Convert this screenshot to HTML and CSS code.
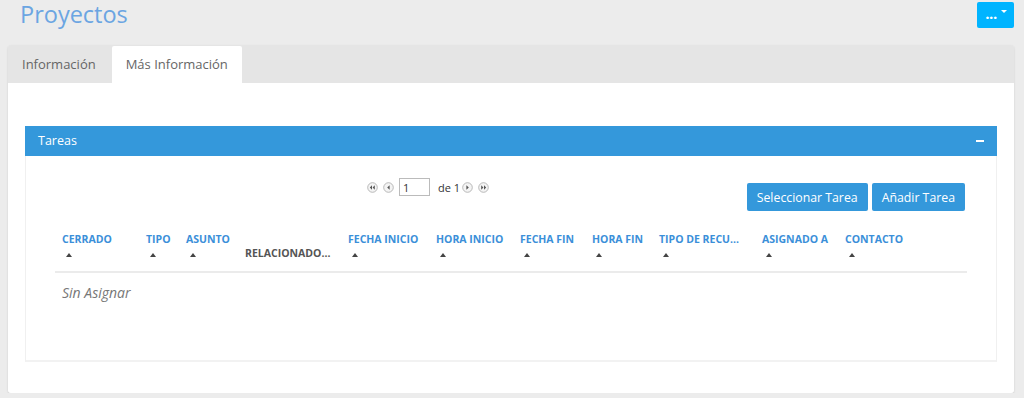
FILE: index.html
```html
<!DOCTYPE html>
<html lang="es">
<head>
    <meta charset="UTF-8">
    <title>Proyectos</title>
    <link rel="stylesheet" href="styles.css">
</head>
<body>
    <div class="page-header">
        <h1>Proyectos</h1>
        <button class="btn-more">...<span class="caret"></span></button>
    </div>

    <div class="tabs">
        <div class="tab-bar">
            <div class="tab">Información</div>
            <div class="tab active">Más Información</div>
        </div>
        <div class="tab-content">
            <div class="panel">
                <div class="panel-heading">
                    <span>Tareas</span>
                    <span class="collapse"></span>
                </div>
                <div class="panel-body">
                    <div class="toolbar">
                        <div class="pager">
                            <svg class="pg" viewBox="0 0 11 11"><circle cx="5.5" cy="5.5" r="4.8"/><path d="M5 3.2v4.6L2.8 5.5zM7.8 3.2v4.6L5.6 5.5z"/></svg>
                            <svg class="pg" viewBox="0 0 11 11"><circle cx="5.5" cy="5.5" r="4.8"/><path d="M6.6 3.2v4.6L4.2 5.5z"/></svg>
                            <input type="text" value="1">
                            <span class="of">de 1</span>
                            <svg class="pg" viewBox="0 0 11 11"><circle cx="5.5" cy="5.5" r="4.8"/><path d="M4.4 3.2v4.6L6.8 5.5z"/></svg>
                            <svg class="pg" viewBox="0 0 11 11"><circle cx="5.5" cy="5.5" r="4.8"/><path d="M3.2 3.2v4.6L5.4 5.5zM6 3.2v4.6L8.2 5.5z"/></svg>
                        </div>
                        <div class="actions">
                            <button class="btn">Seleccionar Tarea</button>
                            <button class="btn">Añadir Tarea</button>
                        </div>
                    </div>

                    <table class="grid">
                        <thead>
                            <tr>
                                <th style="width:84px">Cerrado<i class="sort"></i></th>
                                <th style="width:40px">Tipo<i class="sort"></i></th>
                                <th style="width:59px">Asunto<i class="sort"></i></th>
                                <th class="plain" style="width:103px">Relacionado...</th>
                                <th style="width:88px">Fecha Inicio<i class="sort"></i></th>
                                <th style="width:84px">Hora Inicio<i class="sort"></i></th>
                                <th style="width:72px">Fecha Fin<i class="sort"></i></th>
                                <th style="width:67px">Hora Fin<i class="sort"></i></th>
                                <th style="width:103px">Tipo de recu...<i class="sort"></i></th>
                                <th style="width:83px">Asignado a<i class="sort"></i></th>
                                <th>Contacto<i class="sort"></i></th>
                            </tr>
                        </thead>
                        <tbody>
                            <tr>
                                <td colspan="11" class="empty">Sin Asignar</td>
                            </tr>
                        </tbody>
                    </table>
                </div>
            </div>
        </div>
    </div>
</body>
</html>
```

FILE: styles.css
```css
body {
    margin: 0;
    background: #ececec;
    font-family: "Open Sans", "Noto Sans", sans-serif;
    color: #555;
}
.page-header {
    height: 45px;
    display: flex;
    justify-content: space-between;
    align-items: flex-start;
    padding: 0 10px 0 20px;
}
.page-header h1 {
    margin: 0;
    font-size: 23.5px;
    font-weight: 400;
    line-height: 28px;
    color: #6ba5e2;
}
.btn-more {
    margin-top: 2px;
    width: 37px;
    height: 26px;
    background: #00b4ff;
    border: none;
    border-radius: 2px;
    color: white;
    font-family: inherit;
    font-size: 15px;
    font-weight: 700;
    line-height: 1;
    padding: 0 0 4px 1px;
    letter-spacing: -0.5px;
}
.caret {
    display: inline-block;
    vertical-align: 6px;
    margin-left: 4px;
    border-left: 3px solid transparent;
    border-right: 3px solid transparent;
    border-top: 3px solid white;
}
.tabs {
    margin: 0 10px 0 8px;
    border-radius: 3px;
    box-shadow: 0 1px 2px rgba(0,0,0,0.15);
}
.tab-bar {
    display: flex;
    height: 38px;
    background: #e5e5e5;
    border-radius: 3px 3px 0 0;
}
.tab {
    padding: 0 16px 0 14px;
    line-height: 38px;
    font-size: 13px;
    color: #666;
}
.tab.active {
    margin-top: 1px;
    padding: 0 14px;
    line-height: 37px;
    background: white;
    border-radius: 2px 2px 0 0;
}
.tab-content {
    background: white;
    padding: 43px 17px 31px 17px;
    border-radius: 0 0 3px 3px;
}
.panel {
    border: 1px solid #f0f0f0;
    border-top: none;
    border-bottom: 2px solid #f2f2f2;
}
.panel-heading {
    height: 30px;
    margin: 0 -1px;
    background: #3498db;
    color: white;
    font-size: 12.5px;
    line-height: 30px;
    padding: 0 13px;
    display: flex;
    justify-content: space-between;
    align-items: center;
}
.collapse {
    width: 8px;
    height: 2px;
    background: white;
}
.panel-body {
    padding: 22px 29px 48px 29px;
}
.toolbar {
    display: flex;
    align-items: flex-start;
}
.pager {
    margin-left: 312px;
    display: flex;
    align-items: center;
    height: 18px;
}
.pg {
    width: 11px;
    height: 11px;
    margin-right: 5px;
}
.pg circle {
    fill: #f4f4f4;
    stroke: #a9a9a9;
    stroke-width: 0.8;
}
.pg path {
    fill: #555;
}
.pager input {
    width: 31px;
    height: 18px;
    box-sizing: border-box;
    border: 1px solid #bbb;
    padding: 0 3px;
    font-family: inherit;
    font-size: 11px;
    color: #333;
    margin-right: 8px;
}
.of {
    font-size: 11px;
    color: #333;
    margin-right: 2px;
}
.actions {
    margin-left: auto;
    margin-top: 5px;
    margin-right: 2px;
    display: flex;
    gap: 4px;
}
.btn {
    height: 28px;
    background: #3498db;
    border: none;
    border-radius: 2px;
    color: white;
    font-family: inherit;
    font-size: 12.3px;
    padding: 0 10px;
}
.grid {
    width: 100%;
    margin-top: 21px;
    border-collapse: collapse;
    table-layout: fixed;
}
.grid th {
    box-sizing: border-box;
    text-align: left;
    vertical-align: top;
    padding: 0 7px;
    height: 40px;
    font-size: 10.5px;
    font-weight: 700;
    text-transform: uppercase;
    color: #3b8fd9;
    border-bottom: 2px solid #ebebeb;
    line-height: 15px;
    white-space: nowrap;
}
.grid th.plain {
    vertical-align: bottom;
    color: #555;
    padding-bottom: 10px;
}
.sort {
    display: block;
    width: 0;
    height: 0;
    margin: 6px 0 0 4px;
    border-left: 3px solid transparent;
    border-right: 3px solid transparent;
    border-bottom: 4px solid #444;
}
.empty {
    padding: 10px 7px;
    font-size: 14px;
    font-style: italic;
    color: #777;
}
```
